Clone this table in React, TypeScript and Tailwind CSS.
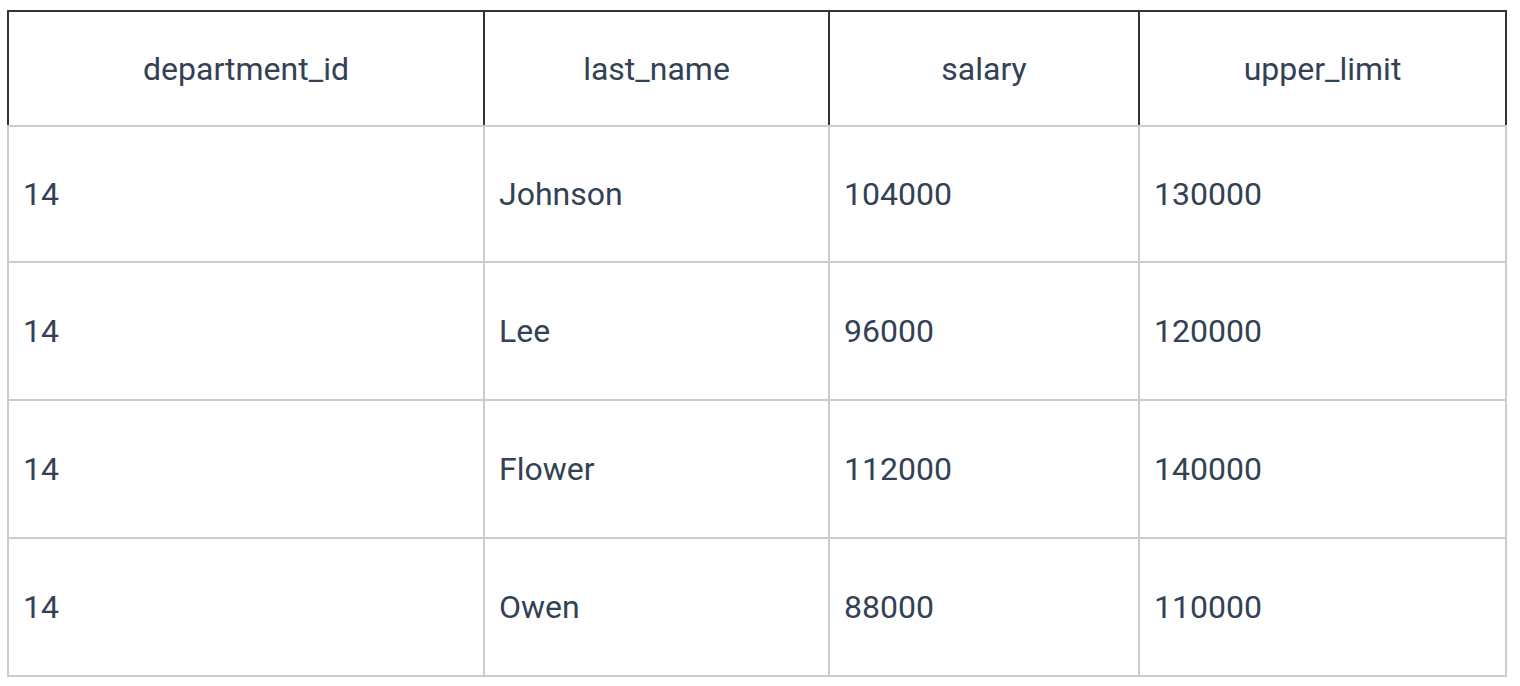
const columns = ["department_id", "last_name", "salary", "upper_limit"];

const rows = [
  ["14", "Johnson", "104000", "130000"],
  ["14", "Lee", "96000", "120000"],
  ["14", "Flower", "112000", "140000"],
  ["14", "Owen", "88000", "110000"],
];

export default function App() {
  return (
    <div className="h-[686px] w-[1520px] overflow-hidden bg-white pl-[7px] pt-[10px] font-['Roboto',sans-serif] text-[32px] text-[#334155]">
      <div className="grid w-[1500px] grid-cols-[478px_345px_310px_367px]">
        {columns.map((c, i) => (
          <div
            key={c}
            className={`flex h-[115px] items-center justify-center border-t-2 border-r-2 border-[#333333] ${i === 0 ? "border-l-2" : ""}`}
          >
            {c}
          </div>
        ))}
        {rows.map((r, ri) =>
          r.map((v, ci) => (
            <div
              key={`${ri}-${ci}`}
              className={`flex h-[138px] items-center border-r-2 border-b-2 border-[#cccccc] pl-[14px] ${ci === 0 ? "border-l-2" : ""} ${ri === 0 ? "border-t-2" : ""}`}
            >
              {v}
            </div>
          ))
        )}
      </div>
    </div>
  );
}
